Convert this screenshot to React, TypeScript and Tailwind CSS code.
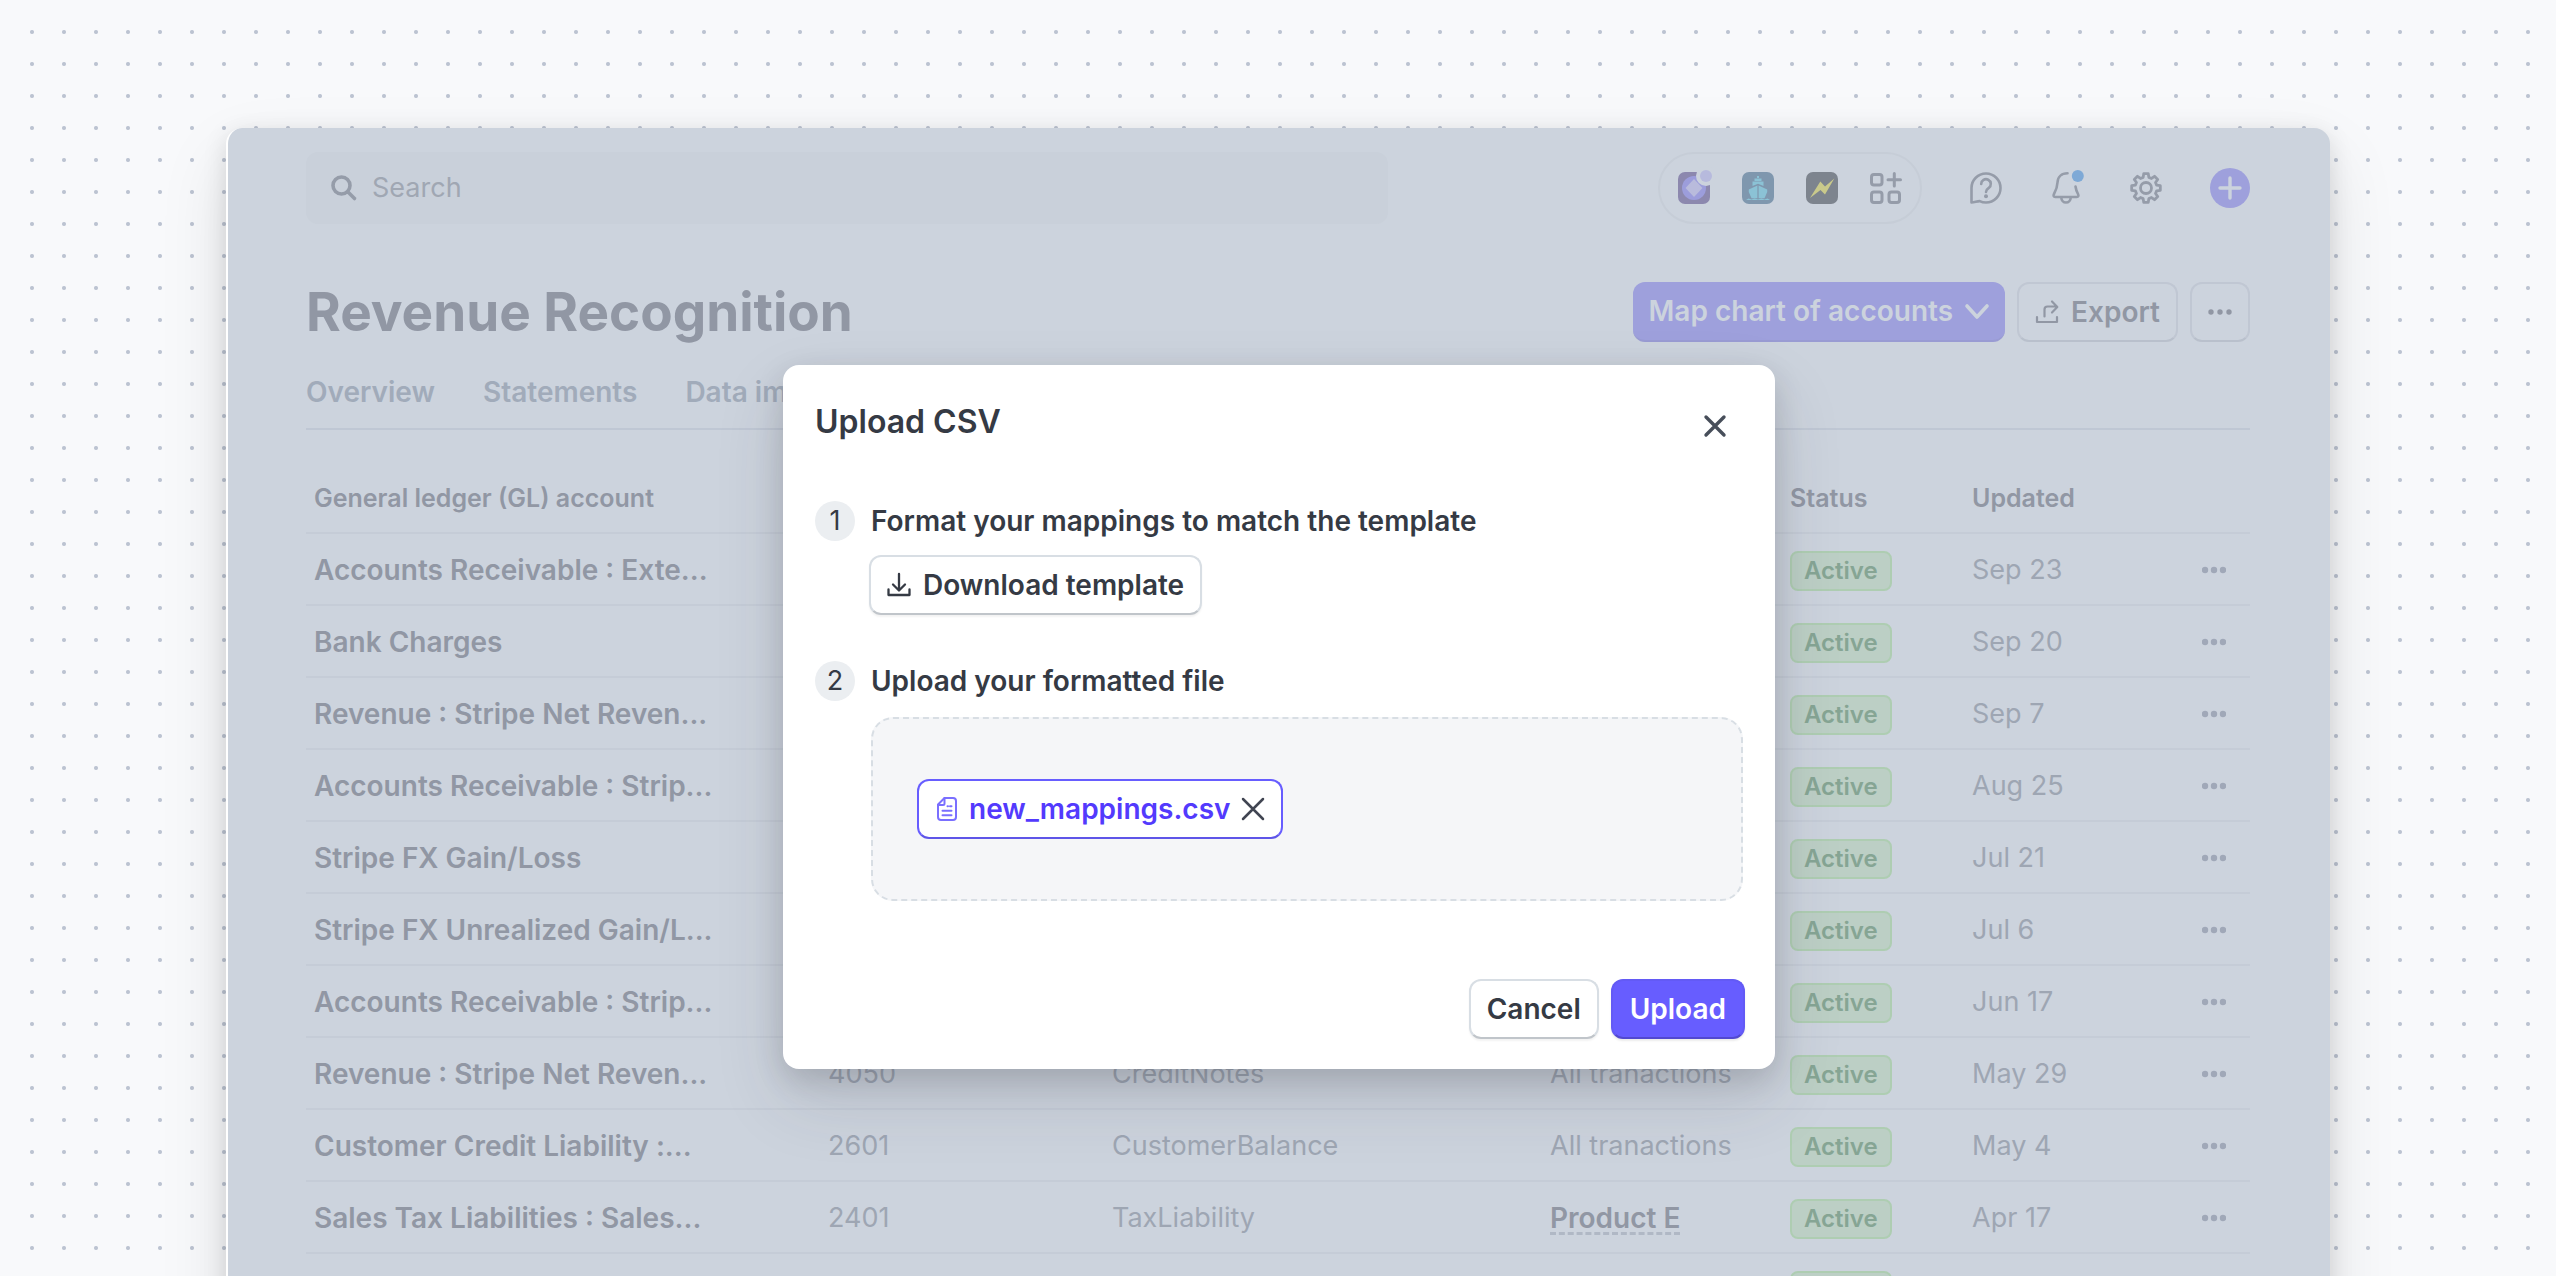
import type { ReactNode } from 'react';

type Row = {
  account: string;
  code: string;
  event: string;
  scope: string;
  updated: string;
  product?: boolean;
};

const rows: Row[] = [
  { account: 'Accounts Receivable : Exte...', code: '', event: '', scope: '', updated: 'Sep 23' },
  { account: 'Bank Charges', code: '', event: '', scope: '', updated: 'Sep 20' },
  { account: 'Revenue : Stripe Net Reven...', code: '', event: '', scope: '', updated: 'Sep 7' },
  { account: 'Accounts Receivable : Strip...', code: '', event: '', scope: '', updated: 'Aug 25' },
  { account: 'Stripe FX Gain/Loss', code: '', event: '', scope: '', updated: 'Jul 21' },
  { account: 'Stripe FX Unrealized Gain/L...', code: '', event: '', scope: '', updated: 'Jul 6' },
  { account: 'Accounts Receivable : Strip...', code: '', event: '', scope: '', updated: 'Jun 17' },
  { account: 'Revenue : Stripe Net Reven...', code: '4050', event: 'CreditNotes', scope: 'All tranactions', updated: 'May 29' },
  { account: 'Customer Credit Liability :...', code: '2601', event: 'CustomerBalance', scope: 'All tranactions', updated: 'May 4' },
  { account: 'Sales Tax Liabilities : Sales...', code: '2401', event: 'TaxLiability', scope: 'Product E', updated: 'Apr 17', product: true },
  { account: '', code: '', event: '', scope: '', updated: '' },
];

/** Outline of an eight-toothed cog centred in a 32px box. */
const cogPoints = Array.from({ length: 8 }, (_, i) => {
  const tooth: [number, number][] = [
    [-15, 11],
    [-9, 14.5],
    [9, 14.5],
    [15, 11],
  ];
  return tooth
    .map(([offset, radius]) => {
      const a = ((i * 45 + offset) * Math.PI) / 180;
      return `${(16 + radius * Math.cos(a)).toFixed(2)},${(16 + radius * Math.sin(a)).toFixed(2)}`;
    })
    .join(' ');
}).join(' ');

function LineIcon({ size = 32, width = 3, children }: { size?: number; width?: number; children: ReactNode }) {
  return (
    <svg
      width={size}
      height={size}
      viewBox={`0 0 ${size} ${size}`}
      fill="none"
      stroke="currentColor"
      strokeWidth={width}
      strokeLinecap="round"
      strokeLinejoin="round"
      className="shrink-0 overflow-visible"
      aria-hidden="true"
    >
      {children}
    </svg>
  );
}

function Dots({ size = 24, r = 3 }: { size?: number; r?: number }) {
  return (
    <svg width={size} height="8" viewBox="0 0 24 8" fill="currentColor" aria-hidden="true">
      <circle cx="3" cy="4" r={r} />
      <circle cx="12" cy="4" r={r} />
      <circle cx="21" cy="4" r={r} />
    </svg>
  );
}

function IconButton({ label, children }: { label: string; children: ReactNode }) {
  return (
    <button type="button" aria-label={label} className="flex shrink-0 items-center justify-center">
      {children}
    </button>
  );
}

function TopBar() {
  return (
    <header className="flex h-[72px] items-center gap-12 text-[#959ca9]">
      <label className="flex h-full max-w-[1082px] flex-1 items-center gap-4 rounded-xl bg-[#c9d0da] pl-6">
        <LineIcon size={26} width={3.6}>
          <circle cx="11.5" cy="10.5" r="8.5" />
          <path d="M18 17l6.500 6.500" />
        </LineIcon>
        <input
          type="search"
          aria-label="Search"
          placeholder="Search"
          className="min-w-0 flex-1 bg-transparent text-[27px] leading-10 outline-none placeholder:text-[#a0a7b3]"
        />
      </label>

      <div className="ml-auto flex h-full items-center gap-8 rounded-full border-2 border-[#c6cdd7] px-[18px]">
        <IconButton label="Gem app">
          <svg width="32" height="32" viewBox="0 0 32 32" className="overflow-visible" aria-hidden="true">
            <rect width="32" height="32" rx="7" fill="#8c88ae" />
            <circle cx="16" cy="16" r="12" fill="#9c9ddb" />
            <path d="M16 7l8.500 9-8.500 9-8.500-9z" fill="#b9bbdc" />
            <circle cx="28" cy="4" r="10" fill="#ccd3dd" />
            <circle cx="28" cy="4" r="6" fill="#b7badd" />
          </svg>
        </IconButton>
        <IconButton label="Ship app">
          <svg width="32" height="32" viewBox="0 0 32 32" aria-hidden="true">
            <rect width="32" height="32" rx="7" fill="#7f97ae" />
            <g fill="#8bc2d5">
              <path d="M15 4h2v2h-2zM12.500 6.500h7v2.500h-7zM10.500 9.500h11v4.500l-5.500-2.200-5.500 2.200z" />
              <path d="M15.400 13.500v12.700H9.500L6.800 20v-2.500zM16.600 13.500v12.700h5.900L25.200 20v-2.500z" />
              <path d="M4 28l2.500-1.500 3 1 3-1 3.500 1 3.500-1 3 1 3-1L28 28z" />
            </g>
          </svg>
        </IconButton>
        <IconButton label="Lightning app">
          <svg width="32" height="32" viewBox="0 0 32 32" aria-hidden="true">
            <rect width="32" height="32" rx="7" fill="#7d848e" />
            <path d="M4 26L14.300 9.500l4.700 5L28.300 6.500 19 22.500 14.500 18z" fill="#c9c98b" />
          </svg>
        </IconButton>
        <IconButton label="Add app">
          <LineIcon>
            <rect x="1.500" y="2.500" width="10.500" height="10.500" rx="2.500" />
            <rect x="1.500" y="20" width="10.500" height="10.500" rx="2.500" />
            <rect x="19" y="20" width="10.500" height="10.500" rx="2.500" />
            <path d="M24.300 1.500v12.500M18 7.800h12.500" />
          </LineIcon>
        </IconButton>
      </div>

      <IconButton label="Help">
        <LineIcon width={2.6}>
          <path d="M1.500 30.500V16A14.500 14.500 0 1 1 16 30.500c-2.500 0-4.500-.500-6.300-1.400-2.600 0-5.400 1.400-8.200 1.400z" />
          <path d="M11.200 12a4.800 4.800 0 1 1 7.600 3.900c-1.900 1.300-2.800 2.100-2.800 4" />
          <circle cx="16" cy="24.300" r="2" fill="currentColor" stroke="none" />
        </LineIcon>
      </IconButton>
      <IconButton label="Notifications">
        <LineIcon width={2.6}>
          <g transform="translate(2 0)">
            <path d="M15.500 1.300C9.500 1.300 5.700 5 5.500 10.500c-.200 5-1 7-3.500 11.500-.900 1.700-.400 3 1.200 3h21.600c1.600 0 2.100-1.300 1.200-3-1.200-2.300-2.100-4.500-2.500-7.500" />
            <path d="M9.300 25.500a4.700 5 0 0 0 9.400 0" />
            <circle cx="25.800" cy="4" r="6" fill="#7ea9d6" stroke="none" />
          </g>
        </LineIcon>
      </IconButton>
      <IconButton label="Settings">
        <LineIcon width={2.8}>
          <polygon points={cogPoints} />
          <circle cx="16" cy="16" r="5.500" />
        </LineIcon>
      </IconButton>
      <button
        type="button"
        aria-label="Create"
        className="flex size-10 shrink-0 items-center justify-center rounded-full bg-[#9ea0dc] text-[#ccd3dd]"
      >
        <LineIcon size={24} width={3.4}>
          <path d="M12 2v20M2 12h20" />
        </LineIcon>
      </button>
    </header>
  );
}

function TitleBar() {
  return (
    <div className="mt-[58px] flex h-[60px] items-center gap-3 text-[28px] leading-10 font-semibold text-[#9197a4]">
      <h1 className="mr-auto text-[53px] leading-[60px] font-bold">Revenue Recognition</h1>
      <button
        type="button"
        className="flex h-full items-center gap-3 rounded-xl border-b-2 border-[#999bd3] bg-[#9ea0dc] px-4 text-[#ccd3dd]"
      >
        Map chart of accounts
        <LineIcon size={24} width={3.6}>
          <path d="M2 7l10 11L22 7" />
        </LineIcon>
      </button>
      <button
        type="button"
        className="flex h-full items-center gap-3 rounded-xl border-2 border-[#c0c7d3] border-b-[#b9c0cc] px-4"
      >
        <LineIcon size={24} width={2.2}>
          <path d="M2 17v5h20v-5" />
          <path d="M9.500 16.500V9.500a3 3 0 0 1 3-3H22M17 1.500l5.300 5.500-5.300 5.500" />
        </LineIcon>
        Export
      </button>
      <button
        type="button"
        aria-label="More options"
        className="flex h-full w-[60px] items-center justify-center rounded-xl border-2 border-[#c0c7d3] border-b-[#b9c0cc]"
      >
        <Dots r={2.7} />
      </button>
    </div>
  );
}

function Tabs() {
  return (
    <nav className="mt-[30px] flex gap-12 border-b-2 border-[#bfc7d4] pb-4 text-[28px] leading-10 font-semibold text-[#a1abba]">
      <a href="#overview">Overview</a>
      <a href="#statements">Statements</a>
      <a href="#data-imports">Data imports</a>
    </nav>
  );
}

function AccountsTable() {
  return (
    <table className="mt-8 w-full table-fixed border-separate border-spacing-0 text-left text-[27px] leading-10 text-[#9ea6b3]">
      <colgroup>
        <col className="w-[514px]" />
        <col className="w-[284px]" />
        <col className="w-[438px]" />
        <col className="w-[240px]" />
        <col className="w-[182px]" />
        <col />
        <col className="w-[80px]" />
      </colgroup>
      <thead className="text-[25px] text-[#9197a4]">
        <tr className="h-[72px] *:border-b-2 *:border-[#c5ccd7] *:px-2 *:pt-0.5 *:font-semibold">
          <th scope="col">General ledger (GL) account</th>
          <td />
          <td />
          <td />
          <th scope="col">Status</th>
          <th scope="col">Updated</th>
          <td />
        </tr>
      </thead>
      <tbody>
        {rows.map((row, i) => (
          <tr key={i} className="h-[72px] *:border-b-2 *:border-[#c5ccd7] *:px-2 *:pt-0.5 *:whitespace-nowrap">
            <th scope="row" className="text-[28px] font-semibold text-[#9197a4]">
              {row.account}
            </th>
            <td>{row.code}</td>
            <td>{row.event}</td>
            <td>
              {row.product ? (
                <a
                  href="#product"
                  className="text-[28px] font-semibold text-[#9197a4] underline decoration-[#b0b8c5] decoration-dashed decoration-[3px] underline-offset-4"
                >
                  {row.scope}
                </a>
              ) : (
                row.scope
              )}
            </td>
            <td>
              <span className="inline-flex h-10 items-center rounded-lg border-2 border-[#aecdb2] bg-[#bccfc5] px-3 align-middle text-2xl font-semibold text-[#86a594]">
                Active
              </span>
            </td>
            <td>{row.updated}</td>
            <td>
              <button type="button" aria-label="Row options" className="flex h-10 w-full items-center pl-6 text-[#a0a8b8]">
                <Dots r={3.2} />
              </button>
            </td>
          </tr>
        ))}
      </tbody>
    </table>
  );
}

function StepHeading({ n, children }: { n: number; children: ReactNode }) {
  return (
    <div className="flex items-center gap-4">
      <span className="flex size-10 items-center justify-center rounded-full bg-[#ebeef1] text-[27px] leading-10">{n}</span>
      <h3 className="text-[28px] leading-10 font-semibold">{children}</h3>
    </div>
  );
}

function UploadDialog() {
  return (
    <section
      role="dialog"
      aria-labelledby="upload-title"
      className="w-[992px] rounded-2xl bg-white pb-[30px] text-[28px] leading-10 text-[#353a44] shadow-[0_30px_70px_rgba(48,49,61,0.14),0_10px_30px_rgba(0,0,0,0.14)]"
    >
      <div className="flex items-end justify-between pt-[37px] pr-11 pl-8">
        <h2 id="upload-title" className="text-[32px] leading-10 font-semibold">
          Upload CSV
        </h2>
        <button type="button" aria-label="Close" className="flex size-8 items-center justify-center text-[#474e5a]">
          <LineIcon size={22} width={3.4}>
            <path d="M2 2l18 18M20 2L2 20" />
          </LineIcon>
        </button>
      </div>

      <div className="px-8 pt-[59px]">
        <StepHeading n={1}>Format your mappings to match the template</StepHeading>
        <button
          type="button"
          className="mt-3.5 ml-[54px] flex h-[60px] items-center gap-3 rounded-xl border-2 border-[#d8dee4] border-b-[#c0c5ca] bg-white px-4 font-semibold shadow-[0_2px_2px_rgba(0,0,0,0.05)]"
        >
          <LineIcon size={24} width={2.3}>
            <path d="M1.500 16.500V22h21v-5.500" />
            <path d="M12 1v16.500M6 11.500l6 6 6-6" />
          </LineIcon>
          Download template
        </button>

        <div className="mt-[46px]">
          <StepHeading n={2}>Upload your formatted file</StepHeading>
        </div>
        <div className="mt-4 ml-14 flex h-[184px] items-center rounded-[22px] border-2 border-dashed border-[#d8dee4] bg-[#f5f6f8] px-11">
          <div className="flex h-[60px] items-center gap-2.5 rounded-xl border-2 border-[#675dff] border-b-[#5e55e8] bg-white px-4 font-semibold text-[#533afd]">
            <svg
              width="24"
              height="24"
              viewBox="0 0 24 24"
              fill="none"
              stroke="#7a6fff"
              strokeWidth="2"
              strokeLinecap="round"
              strokeLinejoin="round"
              aria-hidden="true"
            >
              <path d="M9.500 1H18a3 3 0 0 1 3 3v16a3 3 0 0 1-3 3H6a3 3 0 0 1-3-3V7.500z" />
              <path d="M9.500 1v5.500a1.500 1.500 0 0 1-1.500 1.500H3M12.500 9.300h.500M15 9.300h1.500M7.500 13.800h9M7.500 18.300h9" />
            </svg>
            new_mappings.csv
            <button type="button" aria-label="Remove file" className="flex size-6 items-center justify-center text-[#414552]">
              <LineIcon size={22} width={2.5}>
                <path d="M1 1l20 20M21 1L1 21" />
              </LineIcon>
            </button>
          </div>
        </div>
      </div>

      <div className="mt-[78px] flex h-[60px] justify-end gap-3 pr-[30px] font-semibold">
        <button
          type="button"
          className="rounded-xl border-2 border-[#d8dee4] border-b-[#c0c5ca] bg-white px-4 shadow-[0_2px_2px_rgba(0,0,0,0.05)]"
        >
          Cancel
        </button>
        <button
          type="button"
          className="rounded-xl border-2 border-[#635af5] border-b-[#5249cf] bg-[#675dff] px-[17px] text-white shadow-[0_2px_2px_rgba(0,0,0,0.08)]"
        >
          Upload
        </button>
      </div>
    </section>
  );
}

export default function App() {
  return (
    <div className="h-screen overflow-hidden border-t-16 border-l-16 border-[#f8f9fb] bg-[#f8f9fb] bg-[radial-gradient(circle_at_center,#bcc3d1_1.500px,transparent_2.500px)] bg-[length:32px_32px] pt-28 pr-[226px] pl-[210px] font-[Inter,'Noto_Sans',sans-serif]">
      <main className="relative min-h-full rounded-t-2xl border-l-2 border-white bg-[#ccd3dd] pt-6 pr-20 pl-[78px] shadow-[0_30px_70px_rgba(0,0,0,0.10),0_6px_24px_rgba(0,0,0,0.12)]">
        <TopBar />
        <TitleBar />
        <Tabs />
        <AccountsTable />
        <div className="absolute inset-x-0 top-[237px] flex justify-center">
          <UploadDialog />
        </div>
      </main>
    </div>
  );
}
